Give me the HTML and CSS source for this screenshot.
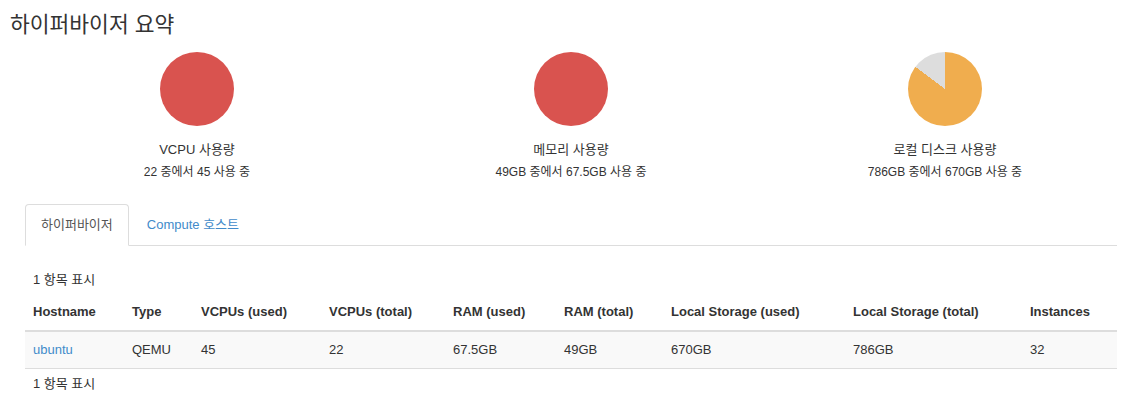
FILE: index.html
```html
<!DOCTYPE html>
<html lang="ko">
<head>
<meta charset="utf-8">
<title>하이퍼바이저 요약</title>
<link rel="stylesheet" href="styles.css">
</head>
<body>
<h1 class="page-title">하이퍼바이저 요약</h1>
<div class="charts">
  <div class="chart">
    <div class="pie pie-red" style="--p:100%"></div>
    <div class="chart-label">VCPU 사용량</div>
    <div class="chart-sub">22 중에서 45 사용 중</div>
  </div>
  <div class="chart">
    <div class="pie pie-red" style="--p:100%"></div>
    <div class="chart-label">메모리 사용량</div>
    <div class="chart-sub">49GB 중에서 67.5GB 사용 중</div>
  </div>
  <div class="chart">
    <div class="pie pie-orange" style="--p:85.24%"></div>
    <div class="chart-label">로컬 디스크 사용량</div>
    <div class="chart-sub">786GB 중에서 670GB 사용 중</div>
  </div>
</div>
<div class="content">
  <ul class="tabs">
    <li class="tab active"><a>하이퍼바이저</a></li>
    <li class="tab"><a href="#">Compute 호스트</a></li>
  </ul>
  <div class="count count-top">1 항목 표시</div>
  <table class="table">
    <thead>
      <tr>
        <th class="c-host">Hostname</th>
        <th class="c-type">Type</th>
        <th class="c-vu">VCPUs (used)</th>
        <th class="c-vt">VCPUs (total)</th>
        <th class="c-ru">RAM (used)</th>
        <th class="c-rt">RAM (total)</th>
        <th class="c-lu">Local Storage (used)</th>
        <th class="c-lt">Local Storage (total)</th>
        <th class="c-in">Instances</th>
      </tr>
    </thead>
    <tbody>
      <tr>
        <td><a href="#">ubuntu</a></td>
        <td>QEMU</td>
        <td>45</td>
        <td>22</td>
        <td>67.5GB</td>
        <td>49GB</td>
        <td>670GB</td>
        <td>786GB</td>
        <td>32</td>
      </tr>
    </tbody>
  </table>
  <div class="count count-bottom">1 항목 표시</div>
</div>
</body>
</html>
```
FILE: styles.css
```css
* { box-sizing: border-box; }
body {
  margin: 0;
  font-family: "Liberation Sans", "Noto Sans CJK KR", sans-serif;
  font-size: 13px;
  line-height: 20px;
  color: #333;
  background: #fff;
}
a { color: #428bca; text-decoration: none; }

.page-title {
  margin: 0;
  padding: 9px 0 0 10px;
  font-size: 21.5px;
  font-weight: 400;
  line-height: 33px;
  color: #333;
}

.charts {
  display: grid;
  grid-template-columns: repeat(3, 1fr);
  margin-left: 10px;
  padding-top: 10px;
}
.chart {
  display: flex;
  flex-direction: column;
  align-items: center;
}
.pie {
  width: 74px;
  height: 74px;
  border-radius: 50%;
}
.pie-red { background: conic-gradient(#d9534f 0 var(--p), #ddd 0); }
.pie-orange { background: conic-gradient(#f0ad4e 0 var(--p), #ddd 0); }
.chart-label {
  margin-top: 14px;
  font-size: 13px;
  line-height: 20px;
}
.chart-sub {
  margin-top: 2px;
  font-size: 12px;
  line-height: 20px;
}

.content {
  margin: 0 15px 0 25px;
  padding-top: 22px;
}
.tabs {
  list-style: none;
  margin: 0;
  padding: 0;
  display: flex;
  border-bottom: 1px solid #ddd;
}
.tab { margin-right: 2px; margin-bottom: -1px; }
.tab a {
  display: block;
  padding: 10px 15px;
  line-height: 20px;
  border: 1px solid transparent;
  border-radius: 4px 4px 0 0;
}
.tab.active a {
  color: #555;
  background: #fff;
  border-color: #ddd #ddd transparent;
}

.count {
  padding: 8px;
  line-height: 20px;
}
.count-top { padding-top: 24px; padding-bottom: 2px; }
.count-bottom { padding-top: 5px; }

.table {
  width: 100%;
  border-collapse: collapse;
  border-spacing: 0;
}
.table th, .table td {
  padding: 8px;
  text-align: left;
  line-height: 20px;
  vertical-align: bottom;
}
.table th {
  padding-top: 10px;
  font-weight: 700;
  border-bottom: 2px solid #ddd;
}
.table td {
  border-bottom: 1px solid #ddd;
  background: #f9f9f9;
}
.c-host { width: 99px; }
.c-type { width: 69px; }
.c-vu { width: 128px; }
.c-vt { width: 124px; }
.c-ru { width: 111px; }
.c-rt { width: 107px; }
.c-lu { width: 182px; }
.c-lt { width: 177px; }
.c-in { width: 95px; }
```
